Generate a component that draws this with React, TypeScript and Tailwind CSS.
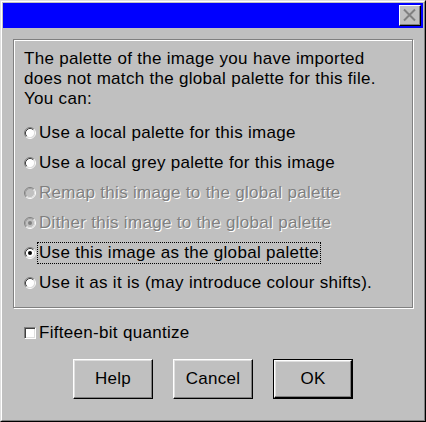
import React from 'react'

type Opt = { label: string; disabled?: boolean; checked?: boolean; focused?: boolean }

const options: Opt[] = [
  { label: 'Use a local palette for this image' },
  { label: 'Use a local grey palette for this image' },
  { label: 'Remap this image to the global palette', disabled: true },
  { label: 'Dither this image to the global palette', disabled: true, checked: true },
  { label: 'Use this image as the global palette', checked: true, focused: true },
  { label: 'Use it as it is (may introduce colour shifts).' },
]

function Radio({ checked, disabled }: { checked?: boolean; disabled?: boolean }) {
  // classic sunken radio: dark arcs top-left, light arcs bottom-right
  return (
    <svg width="12" height="12" viewBox="0 0 12 12" className="shrink-0">
      <circle cx="6" cy="6" r="4.5" fill={disabled ? '#c0c0c0' : '#ffffff'} />
      <path d="M2.11 9.89 A5.5 5.5 0 0 1 9.89 2.11" fill="none" stroke="#808080" strokeWidth="1" />
      <path d="M9.89 2.11 A5.5 5.5 0 0 1 2.11 9.89" fill="none" stroke="#ffffff" strokeWidth="1" />
      <path d="M2.82 9.18 A4.5 4.5 0 0 1 9.18 2.82" fill="none" stroke={disabled ? '#a0a0a0' : '#404040'} strokeWidth="1" />
      <path d="M9.18 2.82 A4.5 4.5 0 0 1 2.82 9.18" fill="none" stroke="#dfdfdf" strokeWidth="1" />
      {checked && <circle cx="6" cy="6" r="2" fill={disabled ? '#808080' : '#000000'} />}
    </svg>
  )
}

function Button({ label, isDefault }: { label: string; isDefault?: boolean }) {
  const bevel = (
    <div className="flex h-full w-full items-center justify-center border border-t-white border-l-white border-r-black border-b-black shadow-[inset_-1px_-1px_0_#808080,inset_1px_1px_0_#dfdfdf]">
      {label}
    </div>
  )
  return isDefault ? (
    <div className="h-[40px] w-[80px] border border-black">{bevel}</div>
  ) : (
    <div className="h-[40px] w-[80px]">{bevel}</div>
  )
}

export default function App() {
  return (
    <div className="h-[422px] w-[426px] border border-t-[#dfdfdf] border-l-[#dfdfdf] border-r-black border-b-black bg-[#c0c0c0] font-['Liberation_Sans',Arial,sans-serif] text-[17px] leading-[20px] tracking-[0.3px] text-black">
      <div className="flex h-full flex-col border border-t-white border-l-white border-r-[#808080] border-b-[#808080] p-px">
        {/* Title bar */}
        <div className="flex h-[25px] shrink-0 items-start justify-end bg-[#0000ff] pt-[2px] pr-[2px]">
          <div className="h-[21px] w-[22px] border border-t-white border-l-white border-r-black border-b-black bg-[#c0c0c0] shadow-[inset_-1px_-1px_0_#808080]">
            <svg width="20" height="19" viewBox="0 0 20 19">
              <path d="M4 3.5 L15 14.5 M15 3.5 L4 14.5" stroke="#808080" strokeWidth="2" />
            </svg>
          </div>
        </div>

        {/* Group box */}
        <div className="mx-[10px] mt-[11px] h-[269px] border border-[#808080] pt-[9px] pl-[10px] shadow-[inset_1px_1px_0_#fff,1px_1px_0_#fff]">
          <p>
            The palette of the image you have imported
            <br />
            does not match the global palette for this file.
            <br />
            You can:
          </p>
          <div className="mt-[9px] flex flex-col">
            {options.map((o) => (
              <div key={o.label} className="flex h-[30px] items-center">
                <Radio checked={o.checked} disabled={o.disabled} />
                <span
                  className={`ml-px border px-px whitespace-nowrap ${
                    o.focused ? 'border-dotted border-black' : 'border-transparent'
                  } ${o.disabled ? 'text-[#808080] [text-shadow:1px_1px_0_#fff]' : ''}`}
                >
                  {o.label}
                </span>
              </div>
            ))}
          </div>
        </div>

        {/* Checkbox */}
        <div className="mt-[15px] ml-[21px] flex h-[20px] items-center">
          <div className="h-[12px] w-[12px] border border-t-[#808080] border-l-[#808080] border-r-white border-b-white bg-white shadow-[inset_1px_1px_0_#404040,inset_-1px_-1px_0_#dfdfdf]" />
          <span className="ml-[3px]">Fifteen-bit quantize</span>
        </div>

        {/* Buttons */}
        <div className="mt-[16px] flex justify-center gap-[20px]">
          <Button label="Help" />
          <Button label="Cancel" />
          <Button label="OK" isDefault />
        </div>
      </div>
    </div>
  )
}
